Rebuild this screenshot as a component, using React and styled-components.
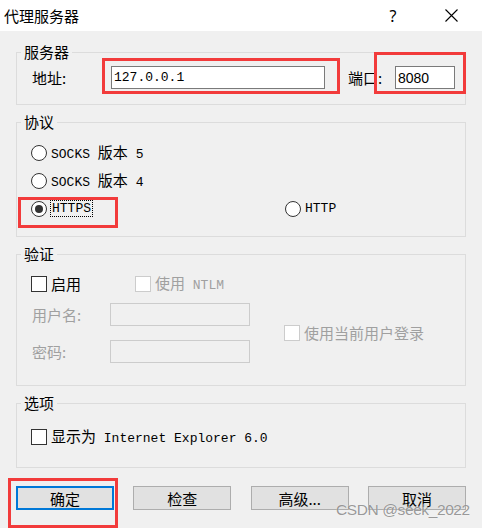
import React from "react";
import styled, { createGlobalStyle } from "styled-components";

const GlobalStyle = createGlobalStyle`
  html, body {
    margin: 0;
    padding: 0;
    background: #f0f0f0;
  }
  body {
    font-family: "Noto Sans CJK SC", "Noto Sans", sans-serif;
    color: #000;
  }
  * {
    box-sizing: border-box;
  }
`;

const Dialog = styled.div`
  position: relative;
  width: 482px;
  height: 528px;
  background: #f0f0f0;
  overflow: hidden;
`;

const TitleBar = styled.div`
  display: flex;
  align-items: center;
  height: 31px;
  padding: 0 2px 0 4px;
  background: #fff;
`;

const Title = styled.div`
  flex: 1;
  font-size: 15px;
  line-height: 20px;
`;

const TitleButton = styled.div`
  display: flex;
  align-items: center;
  justify-content: center;
  width: 58px;
  height: 31px;
  font-family: "Noto Sans", sans-serif;
  font-size: 16px;
`;

const Body = styled.div`
  display: flex;
  flex-direction: column;
  gap: 7px;
  padding: 11px 16px 0 16px;
`;

const Group = styled.fieldset`
  margin: 0;
  padding: 0;
  min-width: 0;
  border: 1px solid #dcdcdc;
`;

const Legend = styled.legend`
  margin-left: 4px;
  padding: 0 3px;
  font-size: 15px;
  line-height: 20px;
`;

const Content = styled.div`
  display: flex;
  flex-direction: column;
  padding: ${p => p.$pad};
  gap: ${p => p.$gap || 0}px;
`;

const Row = styled.div`
  display: flex;
  align-items: center;
  height: ${p => p.$h || 20}px;
`;

const Label = styled.span`
  display: inline-block;
  width: ${p => p.$w}px;
  margin-left: ${p => p.$ml || 0}px;
  font-size: 15px;
  line-height: 20px;
  color: ${p => (p.$disabled ? "#a0a0a0" : "#000")};
`;

const Input = styled.div`
  display: flex;
  align-items: center;
  width: ${p => p.$w}px;
  height: 23px;
  padding-left: 2px;
  background: ${p => (p.$disabled ? "#f0f0f0" : "#fff")};
  border: 1px solid ${p => (p.$disabled ? "#cccccc" : "#7a7a7a")};
  font-family: ${p =>
    p.$mono ? `"Liberation Mono", monospace` : `"Liberation Sans", sans-serif`};
  font-size: ${p => (p.$mono ? 13 : 14)}px;
`;

const Mono = styled.span`
  font-family: "Liberation Mono", "Noto Sans CJK SC", monospace;
  font-size: 13px;
  line-height: 18px;
  white-space: pre;
  color: ${p => (p.$disabled ? "#a0a0a0" : "#000")};
`;

const Han = styled.span`
  font-family: "Noto Sans CJK SC", sans-serif;
  font-size: 15px;
`;

const Focus = styled.span`
  padding: 0 1px;
  outline: 1px dotted #000;
  outline-offset: 0;
`;

const Option = styled.div`
  display: flex;
  align-items: center;
  gap: 4px;
  width: ${p => (p.$w ? `${p.$w}px` : "auto")};
`;

const Radio = styled.span`
  display: inline-flex;
  align-items: center;
  justify-content: center;
  flex: none;
  width: 16px;
  height: 16px;
  border-radius: 50%;
  border: 1px solid #333;
  background: #fff;
  &::after {
    content: "";
    display: ${p => (p.$checked ? "block" : "none")};
    width: 8px;
    height: 8px;
    border-radius: 50%;
    background: #333;
  }
`;

const Check = styled.span`
  display: inline-block;
  flex: none;
  width: 16px;
  height: 16px;
  border: 1px solid ${p => (p.$disabled ? "#cccccc" : "#333")};
  background: #fff;
`;

const AuthGrid = styled.div`
  display: grid;
  grid-template-columns: 79px 140px 1fr;
  grid-template-rows: 23px 23px;
  row-gap: 14px;
  align-items: center;
  margin-top: 9px;
`;

const SideCheck = styled(Option)`
  grid-column: 3;
  grid-row: 1 / span 2;
  padding-left: 34px;
`;

const Buttons = styled.div`
  display: flex;
  justify-content: space-between;
  margin-top: 11px;
`;

const Button = styled.div`
  display: flex;
  align-items: center;
  justify-content: center;
  width: 98px;
  height: 24px;
  background: #e1e1e1;
  border: ${p => (p.$default ? "2px solid #0078d7" : "1px solid #adadad")};
  font-size: 15px;
`;

const Highlight = styled.div`
  position: absolute;
  left: ${p => p.$x}px;
  top: ${p => p.$y}px;
  width: ${p => p.$w}px;
  height: ${p => p.$h}px;
  border: 3px solid #f23b3b;
  pointer-events: none;
`;

const Watermark = styled.div`
  position: absolute;
  left: 336px;
  top: 501px;
  font-family: "Liberation Sans", Arial, sans-serif;
  font-size: 15.5px;
  letter-spacing: -0.4px;
  color: rgba(110, 110, 110, 0.7);
  text-shadow: 0 0 1px rgba(255, 255, 255, 0.8);
  pointer-events: none;
`;

const CloseIcon = () => (
  <svg width="13" height="13" viewBox="0 0 13 13">
    <path d="M0.5 0.5 L12.5 12.5 M12.5 0.5 L0.5 12.5" stroke="#000" strokeWidth="1.1" fill="none" />
  </svg>
);

export default function App() {
  return (
    <>
      <GlobalStyle />
      <Dialog>
        <TitleBar>
          <Title>代理服务器</Title>
          <TitleButton>?</TitleButton>
          <TitleButton>
            <CloseIcon />
          </TitleButton>
        </TitleBar>

        <Body>
          <Group>
            <Legend>服务器</Legend>
            <Content $pad="4px 0 15px 15px">
              <Row $h={23}>
                <Label $w={79}>地址:</Label>
                <Input $w={214} $mono>127.0.0.1</Input>
                <Label $w={47} $ml={23}>端口:</Label>
                <Input $w={60}>8080</Input>
              </Row>
            </Content>
          </Group>

          <Group>
            <Legend>协议</Legend>
            <Content $pad="7px 0 13px 14px">
              <Row $h={28}>
                <Option>
                  <Radio />
                  <Mono>SOCKS <Han>版本</Han> 5</Mono>
                </Option>
              </Row>
              <Row $h={28}>
                <Option>
                  <Radio />
                  <Mono>SOCKS <Han>版本</Han> 4</Mono>
                </Option>
              </Row>
              <Row $h={28}>
                <Option $w={254}>
                  <Radio $checked />
                  <Mono>
                    <Focus>HTTPS</Focus>
                  </Mono>
                </Option>
                <Option>
                  <Radio />
                  <Mono>HTTP</Mono>
                </Option>
              </Row>
            </Content>
          </Group>

          <Group>
            <Legend>验证</Legend>
            <Content $pad="10px 0 22px 14px">
              <Row>
                <Option $w={104}>
                  <Check />
                  <Label>启用</Label>
                </Option>
                <Option>
                  <Check $disabled />
                  <Mono $disabled><Han>使用</Han> NTLM</Mono>
                </Option>
              </Row>
              <AuthGrid>
                <Label $disabled $ml={1}>用户名:</Label>
                <Input $w={140} $disabled />
                <SideCheck>
                  <Check $disabled />
                  <Label $disabled>使用当前用户登录</Label>
                </SideCheck>
                <Label $disabled $ml={1}>密码:</Label>
                <Input $w={140} $disabled />
              </AuthGrid>
            </Content>
          </Group>

          <Group>
            <Legend>选项</Legend>
            <Content $pad="14px 0 20px 14px">
              <Row>
                <Option>
                  <Check />
                  <Mono><Han>显示为</Han> Internet Explorer 6.0</Mono>
                </Option>
              </Row>
            </Content>
          </Group>

          <Buttons>
            <Button $default>确定</Button>
            <Button>检查</Button>
            <Button>高级...</Button>
            <Button>取消</Button>
          </Buttons>
        </Body>

        <Highlight $x={102} $y={58} $w={238} $h={36} />
        <Highlight $x={374} $y={52} $w={92} $h={42} />
        <Highlight $x={18} $y={197} $w={100} $h={31} />
        <Highlight $x={8} $y={478} $w={110} $h={50} />
        <Watermark>CSDN @seek_2022</Watermark>
      </Dialog>
    </>
  );
}
